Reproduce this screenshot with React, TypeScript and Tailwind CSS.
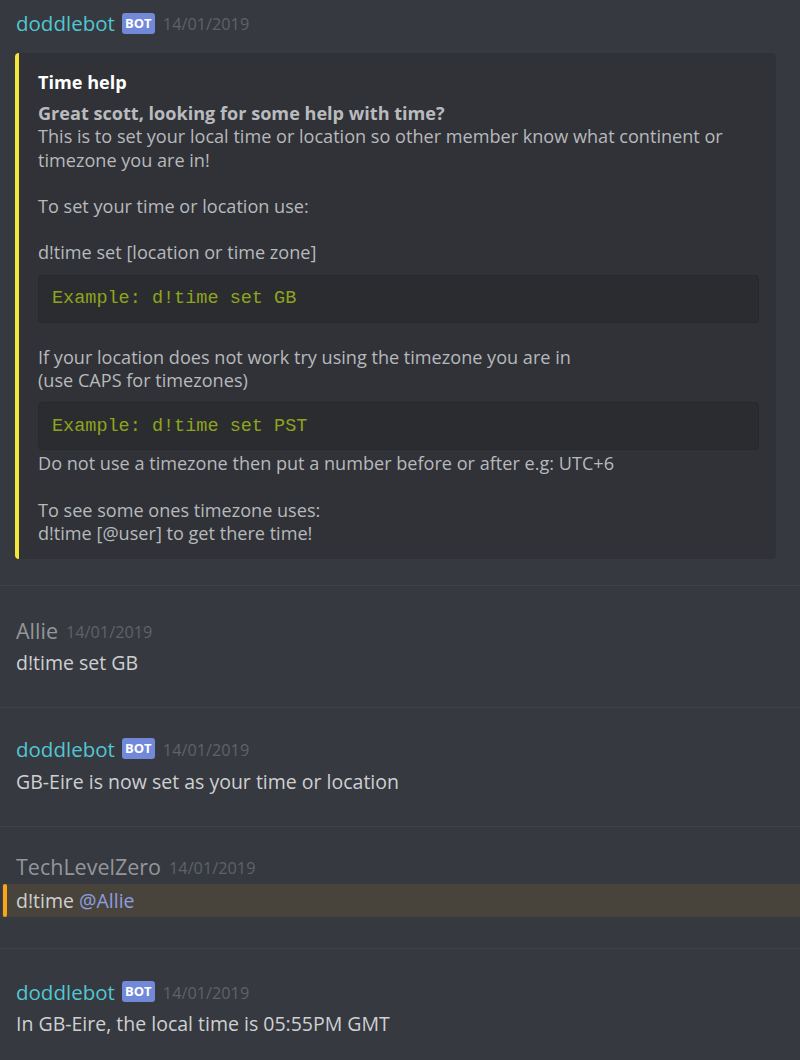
import type { ReactNode } from "react";

const font = { fontFamily: '"Open Sans", "Noto Sans", sans-serif' };

function Header({ name, bot }: { name: string; bot?: boolean }) {
  return (
    <div className="flex h-[26px] items-center">
      <span className={`leading-[26px] ${bot ? "text-[20.5px] text-[#52c6d2]" : "text-[21.5px] text-[#94969a]"}`}>{name}</span>
      {bot && (
        <span className="ml-[7px] flex h-[21px] w-[33px] items-center justify-center rounded-[3px] bg-[#7289da] text-[13px] font-bold leading-none text-white">
          BOT
        </span>
      )}
      <span className="ml-[8px] pt-[2px] text-[16.3px] text-[#5f6268]">14/01/2019</span>
    </div>
  );
}

function Message({ children, className }: { children: ReactNode; className: string }) {
  return <div className={`border-b border-[#3f4248] px-4 ${className}`}>{children}</div>;
}

function Code({ text }: { text: string }) {
  return (
    <div
      className="mt-[10px] flex h-[48px] items-center rounded-[4px] border border-[#26282c] bg-[#2a2c30] px-[13px] text-[18.5px] text-[#8fa41c]"
      style={{ fontFamily: '"Liberation Mono", "DejaVu Sans Mono", monospace' }}
    >
      {text}
    </div>
  );
}

export default function App() {
  return (
    <div className="h-[1060px] w-[800px] overflow-hidden bg-[#36393f]" style={font}>
      <Message className="pt-[10px] pb-[26px]">
        <Header name="doddlebot" bot />
        <div className="mt-[17px] -ml-[1px] mr-[8px] flex rounded-[4px] bg-[#303237]">
          <div className="w-[4px] shrink-0 rounded-l-[4px] bg-[#f5e63a]" />
          <div className="flex-1 pt-[18px] pr-[17px] pb-[14px] pl-[19px] text-[18.1px] leading-[23.2px] text-[#b7b9bc]">
            <div className="font-bold text-white">Time help</div>
            <div className="mt-[8px] font-bold text-[#b9bbbe]">Great scott, looking for some help with time?</div>
            <div>This is to set your local time or location so other member know what continent or timezone you are in!</div>
            <div className="h-[23.2px]" />
            <div>To set your time or location use:</div>
            <div className="h-[23.2px]" />
            <div>d!time set [location or time zone]</div>
            <Code text="Example: d!time set GB" />
            <div className="h-[23.2px]" />
            <div>If your location does not work try using the timezone you are in</div>
            <div>(use CAPS for timezones)</div>
            <Code text="Example: d!time set PST" />
            <div className="mt-[2px]">Do not use a timezone then put a number before or after e.g: UTC+6</div>
            <div className="h-[23.2px]" />
            <div>To see some ones timezone uses:</div>
            <div>d!time [@user] to get there time!</div>
          </div>
        </div>
      </Message>

      <Message className="pt-[32px] pb-[31px]">
        <Header name="Allie" />
        <div className="mt-[6px] text-[19.5px] leading-[26px] text-[#cfd0d2]">d!time set GB</div>
      </Message>

      <Message className="pt-[28px] pb-[31px]">
        <Header name="doddlebot" bot />
        <div className="mt-[7px] text-[19.5px] leading-[26px] text-[#cfd0d2]">GB-Eire is now set as your time or location</div>
      </Message>

      <div className="border-b border-[#3f4248] pt-[27px] pb-[31px]">
        <div className="px-4">
          <Header name="TechLevelZero" />
        </div>
        <div className="relative mt-[4px] ml-[2px] flex h-[33px] items-center bg-[#49443b] pl-[14px] text-[19.5px] text-[#cfd0d2]">
          <div className="absolute top-0 bottom-0 left-[1px] w-[4px] rounded-[2px] bg-[#faa61a]" />
          d!time<span className="ml-[5px] text-[#8c9ee0]">@Allie</span>
        </div>
      </div>

      <div className="px-4 pt-[30px]">
        <Header name="doddlebot" bot />
        <div className="mt-[6px] text-[19.5px] leading-[26px] text-[#cfd0d2]">In GB-Eire, the local time is 05:55PM GMT</div>
      </div>
    </div>
  );
}
